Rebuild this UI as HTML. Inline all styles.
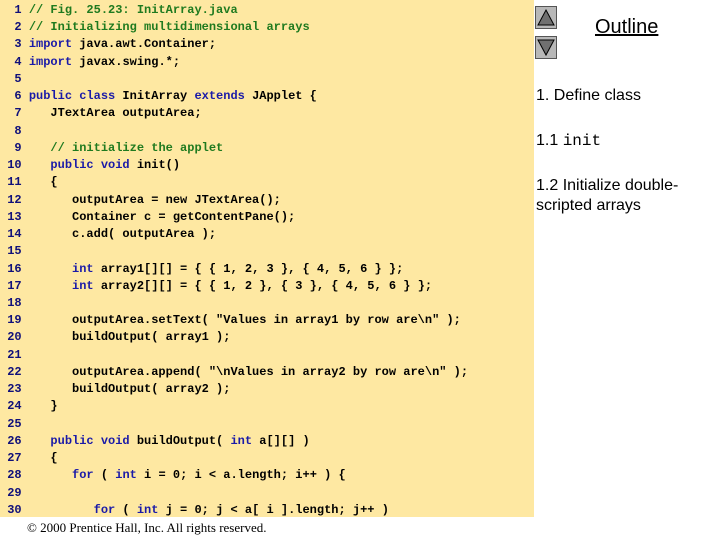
<!DOCTYPE html>
<html><head><meta charset="utf-8"><style>
body{margin:0;width:720px;height:540px;background:#fff;position:relative;overflow:hidden;font-family:"Liberation Sans",sans-serif}
#code{position:absolute;left:0;top:0;width:534px;height:517px;background:#FEE8A2}
pre{margin:0;position:absolute;left:0px;top:2px;font:bold 12px/17.24px "Liberation Mono",monospace;color:#000;white-space:pre}
.n{color:#10107a}.c{color:#1f7a1f}.k{color:#1a1aa8}
.btn{position:absolute;left:535px;width:22px;height:23px;background:#b8b8b8;border:1px solid #555;box-sizing:border-box}
.side{position:absolute;left:536px;font-size:16px;color:#000}
</style></head><body>
<div id="code"></div>
<pre><span class="n">  1</span> <span class="c">// Fig. 25.23: InitArray.java</span>
<span class="n">  2</span> <span class="c">// Initializing multidimensional arrays</span>
<span class="n">  3</span> <span class="k">import</span> java.awt.Container;
<span class="n">  4</span> <span class="k">import</span> javax.swing.*;
<span class="n">  5</span>
<span class="n">  6</span> <span class="k">public class</span> InitArray <span class="k">extends</span> JApplet {
<span class="n">  7</span>    JTextArea outputArea;
<span class="n">  8</span>
<span class="n">  9</span>    <span class="c">// initialize the applet</span>
<span class="n"> 10</span>    <span class="k">public void</span> init()
<span class="n"> 11</span>    {
<span class="n"> 12</span>       outputArea = new JTextArea();
<span class="n"> 13</span>       Container c = getContentPane();
<span class="n"> 14</span>       c.add( outputArea );
<span class="n"> 15</span>
<span class="n"> 16</span>       <span class="k">int</span> array1[][] = { { 1, 2, 3 }, { 4, 5, 6 } };
<span class="n"> 17</span>       <span class="k">int</span> array2[][] = { { 1, 2 }, { 3 }, { 4, 5, 6 } };
<span class="n"> 18</span>
<span class="n"> 19</span>       outputArea.setText( "Values in array1 by row are\n" );
<span class="n"> 20</span>       buildOutput( array1 );
<span class="n"> 21</span>
<span class="n"> 22</span>       outputArea.append( "\nValues in array2 by row are\n" );
<span class="n"> 23</span>       buildOutput( array2 );
<span class="n"> 24</span>    }
<span class="n"> 25</span>
<span class="n"> 26</span>    <span class="k">public void</span> buildOutput( <span class="k">int</span> a[][] )
<span class="n"> 27</span>    {
<span class="n"> 28</span>       <span class="k">for</span> ( <span class="k">int</span> i = 0; i &lt; a.length; i++ ) {
<span class="n"> 29</span>
<span class="n"> 30</span>          <span class="k">for</span> ( <span class="k">int</span> j = 0; j &lt; a[ i ].length; j++ )</pre>
<div style="position:absolute;left:27px;top:520px;font:13px 'Liberation Serif',serif">© 2000 Prentice Hall, Inc.  All rights reserved.</div>
<div class="btn" style="top:6px"><svg width="20" height="21" style="position:absolute;left:0;top:0"><polygon points="10,3 18,18 2,18" fill="#707070" stroke="#000" stroke-width="1"/></svg></div>
<div class="btn" style="top:36px"><svg width="20" height="21" style="position:absolute;left:0;top:0"><polygon points="2,3 18,3 10,18" fill="#707070" stroke="#000" stroke-width="1"/></svg></div>
<div style="position:absolute;left:595px;top:16px;font-size:20px;text-decoration:underline">Outline</div>
<div class="side" style="top:87px">1. Define class</div>
<div class="side" style="top:132px">1.1 <span style="font-family:'Liberation Mono',monospace">init</span></div>
<div class="side" style="top:176px;line-height:20px">1.2 Initialize double-<br>scripted arrays</div>
</body></html>
